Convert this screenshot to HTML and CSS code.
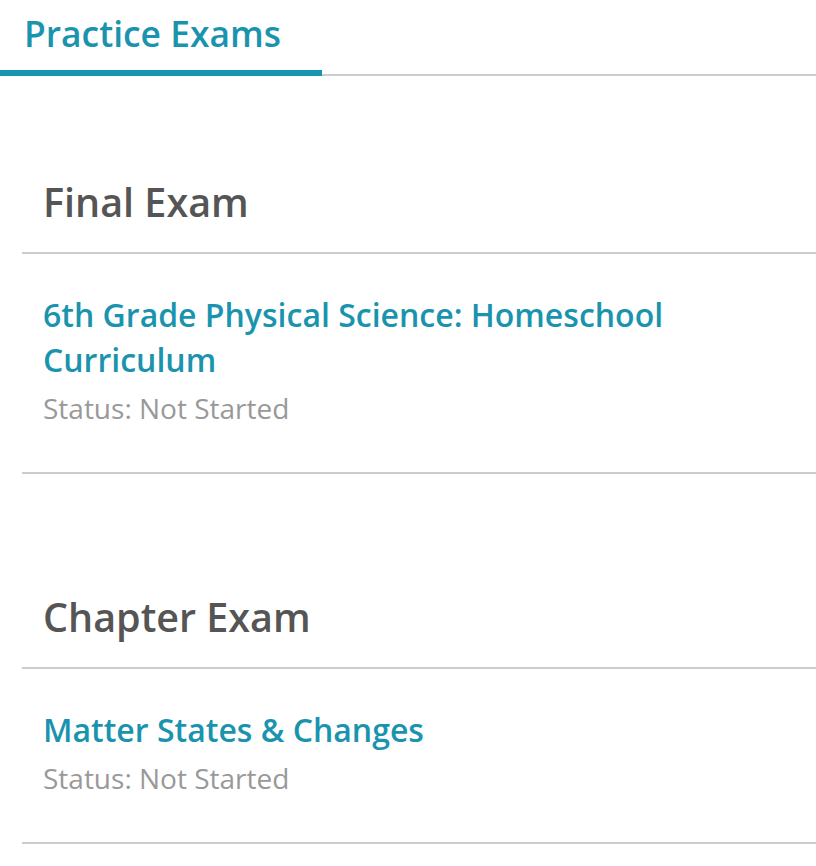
FILE: index.html
```html
<!DOCTYPE html>
<html lang="en">
<head>
  <meta charset="UTF-8">
  <title>Practice Exams</title>
  <link rel="stylesheet" href="styles.css">
</head>
<body>
  <div class="tabs">
    <a class="tab active" href="#">Practice Exams</a>
  </div>

  <div class="content">
    <div class="section">
      <h2 class="section-title">Final Exam</h2>
      <div class="exam">
        <a class="exam-link" href="#">6th Grade Physical Science: Homeschool Curriculum</a>
        <div class="status">Status: Not Started</div>
      </div>
    </div>

    <div class="section">
      <h2 class="section-title">Chapter Exam</h2>
      <div class="exam">
        <a class="exam-link" href="#">Matter States &amp; Changes</a>
        <div class="status">Status: Not Started</div>
      </div>
    </div>
  </div>
</body>
</html>
```

FILE: styles.css
```css
body {
  margin: 0;
  font-family: "Open Sans", Arial, sans-serif;
  background-color: #fff;
}

.tabs {
  display: flex;
  border-bottom: 2px solid #cccccc;
}

.tab {
  display: block;
  width: 322px;
  box-sizing: border-box;
  padding: 9px 24px 13px;
  font-size: 35.4px;
  line-height: 48px;
  font-weight: 600;
  color: #1a94ae;
  text-decoration: none;
  margin-bottom: -2px;
}

.tab.active {
  border-bottom: 6px solid #1a94ae;
}

.content {
  padding-left: 22px;
}

.section {
  margin-top: 100px;
}

.section + .section {
  margin-top: 117px;
}

.section-title {
  margin: 0;
  padding: 0 21px 24px;
  font-size: 39.5px;
  line-height: 52px;
  font-weight: 600;
  color: #555;
  border-bottom: 2px solid #cccccc;
}

.exam {
  padding: 38px 120px 46px 21px;
  border-bottom: 2px solid #cccccc;
}

.exam-link {
  display: block;
  font-size: 32px;
  line-height: 45px;
  font-weight: 600;
  color: #1a94ae;
  text-decoration: none;
}

.status {
  margin-top: 8px;
  font-size: 28px;
  line-height: 36px;
  color: #999;
}
```
